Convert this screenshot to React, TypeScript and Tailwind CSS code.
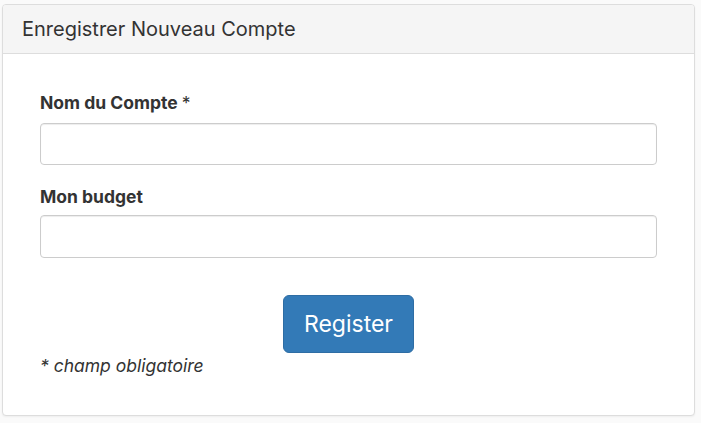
import React, { FC } from 'react';

const App: FC = () => {
  return (
    <div className="w-[701px] h-[423px] bg-[#fafafa] pt-[4px] pl-[2px] font-['Inter',sans-serif] text-[#333]">
      <div className="w-[693px] h-[412px] bg-white border border-[#dddddd] rounded-[4px] shadow-[0_1px_2px_rgba(0,0,0,0.05)] overflow-hidden">
        <div className="h-[49px] bg-[#f5f5f5] border-b border-[#dddddd] px-[19px] flex items-center">
          <h3 className="text-[20px] text-[#333]">Enregistrer Nouveau Compte</h3>
        </div>
        <form className="px-[37px] pt-[37px]" onSubmit={(e) => e.preventDefault()}>
          <div className="mb-[20px]">
            <label htmlFor="nom" className="block text-[17.5px] leading-[24px] font-bold mb-[8px]">
              Nom du Compte <span className="font-normal">*</span>
            </label>
            <input id="nom" type="text" className="w-full h-[42px] border border-[#cccccc] rounded-[4px] px-3 shadow-[inset_0_1px_1px_rgba(0,0,0,0.075)]" />
          </div>
          <div>
            <label htmlFor="budget" className="block text-[17.5px] leading-[24px] font-bold mb-[6px]">
              Mon budget
            </label>
            <input id="budget" type="text" className="w-full h-[43px] border border-[#cccccc] rounded-[4px] px-3 shadow-[inset_0_1px_1px_rgba(0,0,0,0.075)]" />
          </div>
          <div className="flex justify-center mt-[37px]">
            <button type="submit" className="w-[131px] h-[58px] bg-[#337ab7] border border-[#2e6da4] rounded-[6px] text-white text-[23px]">
              Register
            </button>
          </div>
          <p className="italic text-[17.5px] leading-[26px]">* champ obligatoire</p>
        </form>
      </div>
    </div>
  );
};

export default App;
